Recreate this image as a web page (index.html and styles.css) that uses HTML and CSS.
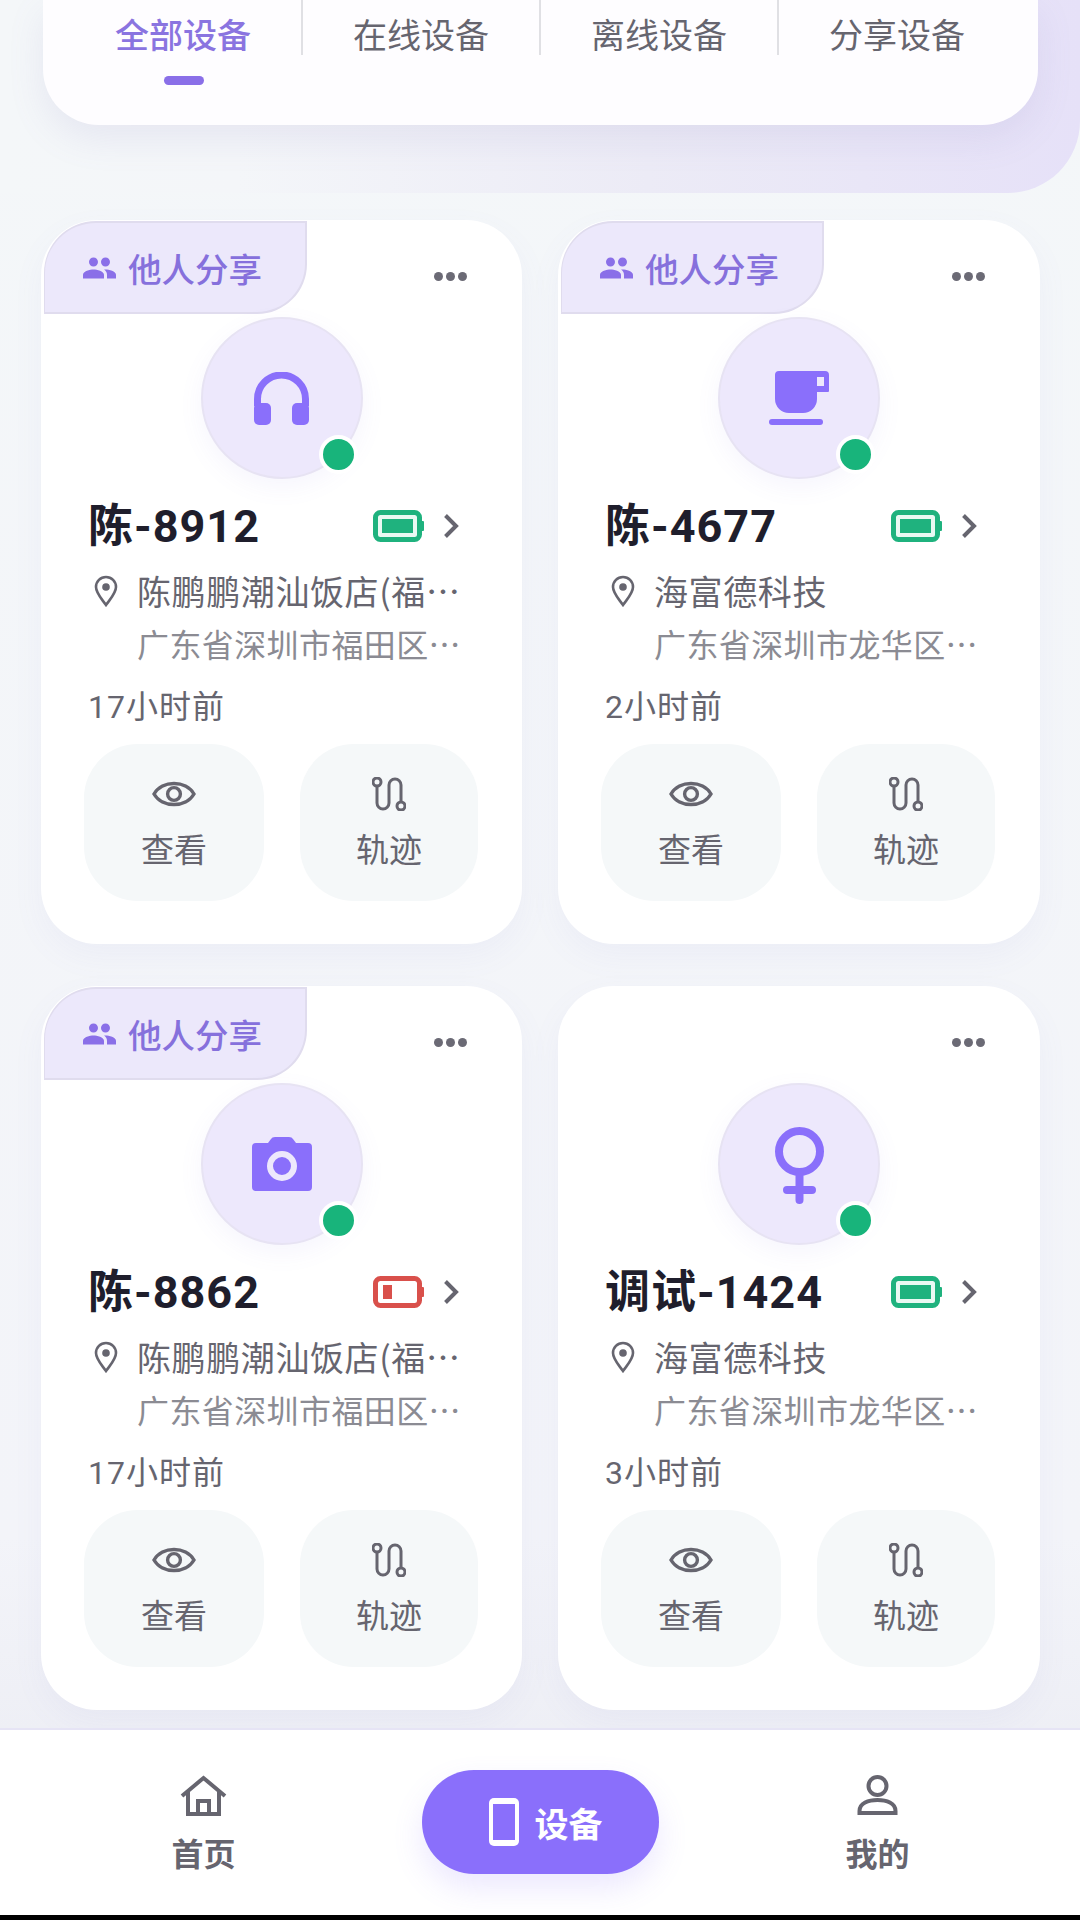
FILE: index.html
```html
<!DOCTYPE html>
<html lang="zh-CN">
<head>
    <meta charset="UTF-8">
    <meta name="viewport" content="width=device-width, initial-scale=1.0">
    <title>设备</title>
    <link rel="stylesheet" href="styles.css">
</head>
<body>
    <!-- Shared icons -->
    <svg class="icon-defs" aria-hidden="true">
        <symbol id="i-people" viewBox="1 5 22 14"><path d="M16 11c1.66 0 2.99-1.34 2.99-3S17.66 5 16 5c-1.66 0-3 1.34-3 3s1.34 3 3 3zm-8 0c1.66 0 2.99-1.34 2.99-3S9.66 5 8 5C6.34 5 5 6.34 5 8s1.34 3 3 3zm0 2c-2.33 0-7 1.17-7 3.5V19h14v-2.5c0-2.33-4.67-3.5-7-3.5zm8 0c-.29 0-.62.02-.97.05 1.16.84 1.97 1.97 1.97 3.45V19h6v-2.5c0-2.33-4.67-3.5-7-3.5z"/></symbol>
        <symbol id="i-headphones" viewBox="0 0 55 53"><path d="M3.5 34V27a24 24 0 0 1 48 0v7" fill="none" stroke="currentColor" stroke-width="7"/><rect y="31" width="17" height="22" rx="5"/><rect x="38" y="31" width="17" height="22" rx="5"/></symbol>
        <symbol id="i-cup" viewBox="0 0 60 54"><path fill-rule="evenodd" d="M10 0h46a4 4 0 0 1 4 4v16a1 1 0 0 1-1 1H48v7a14 14 0 0 1-14 14H20A14 14 0 0 1 6 28V4a4 4 0 0 1 4-4zm38 6v9h7V6z"/><rect y="48" width="54" height="6" rx="3"/></symbol>
        <symbol id="i-camera" viewBox="0 0 60 54"><path d="M4 6h12l3-4q1-2 4-2h14q3 0 4 2l3 4h12a4 4 0 0 1 4 4v40a4 4 0 0 1-4 4H4a4 4 0 0 1-4-4V10a4 4 0 0 1 4-4z"/><circle cx="30" cy="29" r="12" fill="none" stroke="#ede8fc" stroke-width="6"/></symbol>
        <symbol id="i-venus" viewBox="0 0 49 77"><g fill="none" stroke="currentColor" stroke-width="8" stroke-linecap="round"><circle cx="24.5" cy="24.5" r="20.5"/><path d="M24.5 46v27M12 63h25"/></g></symbol>
        <symbol id="i-battery" viewBox="0 0 51 32"><rect x="2.5" y="2.5" width="44" height="27" rx="5" fill="#eaf9f3" stroke="currentColor" stroke-width="5"/><rect x="9" y="9" width="31" height="14" fill="currentColor"/><rect x="48" y="11" width="3" height="10" rx="1" fill="currentColor"/></symbol>
        <symbol id="i-battery-low" viewBox="0 0 51 32"><rect x="2.5" y="2.5" width="44" height="27" rx="5" fill="#fff" stroke="currentColor" stroke-width="5"/><rect x="10" y="9" width="9" height="14" fill="currentColor"/><rect x="48" y="11" width="3" height="10" rx="1" fill="currentColor"/></symbol>
        <symbol id="i-chevron" viewBox="0 0 16 26"><path d="M2.5 2.5L13 13 2.5 23.5" fill="none" stroke="currentColor" stroke-width="4"/></symbol>
        <symbol id="i-pin" viewBox="0 0 24 32"><path d="M12 30C7 23 2 18 2 12a10 10 0 0 1 20 0c0 6-5 11-10 18z" fill="none" stroke="currentColor" stroke-width="2.6"/><circle cx="12" cy="12" r="3.8"/></symbol>
        <symbol id="i-eye" viewBox="0 0 44 30"><g fill="none" stroke="currentColor" stroke-width="3.4"><path d="M2 15C10 1 34 1 42 15 34 29 10 29 2 15z"/><circle cx="22" cy="15" r="6.4"/></g></symbol>
        <symbol id="i-track" viewBox="0 0 34 34"><g fill="none" stroke="currentColor" stroke-width="3"><circle cx="5" cy="5" r="4"/><circle cx="29" cy="29" r="4"/><path d="M5 9v17a6 6 0 0 0 12 0V8a6 6 0 0 1 12 0v17"/></g></symbol>
    </svg>

    <div class="page">
        <div class="header">
            <div class="tabs-card">
                <div class="tab active"><span class="tab-label">全部设备</span><i class="tab-bar"></i></div>
                <div class="tab"><span class="tab-label">在线设备</span></div>
                <div class="tab"><span class="tab-label">离线设备</span></div>
                <div class="tab"><span class="tab-label no-line">分享设备</span></div>
            </div>
        </div>

        <div class="device-grid">
            <div class="device">
                <div class="device-top">
                    <div class="share-tag"><svg class="tag-icon"><use href="#i-people"/></svg>他人分享</div>
                    <div class="more"><i></i><i></i><i></i></div>
                </div>
                <div class="avatar">
                    <svg class="ic-headphones"><use href="#i-headphones"/></svg>
                    <span class="online"></span>
                </div>
                <div class="name-row">
                    <span class="name">陈-8912</span>
                    <svg class="battery"><use href="#i-battery"/></svg>
                    <svg class="chevron"><use href="#i-chevron"/></svg>
                </div>
                <div class="place-row">
                    <svg class="pin"><use href="#i-pin"/></svg>
                    <span class="place">陈鹏鹏潮汕饭店(福…</span>
                </div>
                <div class="address">广东省深圳市福田区…</div>
                <div class="time">17小时前</div>
                <div class="actions">
                    <div class="action"><svg class="ic-eye"><use href="#i-eye"/></svg>查看</div>
                    <div class="action"><svg class="ic-track"><use href="#i-track"/></svg>轨迹</div>
                </div>
            </div>

            <div class="device">
                <div class="device-top">
                    <div class="share-tag"><svg class="tag-icon"><use href="#i-people"/></svg>他人分享</div>
                    <div class="more"><i></i><i></i><i></i></div>
                </div>
                <div class="avatar">
                    <svg class="ic-cup"><use href="#i-cup"/></svg>
                    <span class="online"></span>
                </div>
                <div class="name-row">
                    <span class="name">陈-4677</span>
                    <svg class="battery"><use href="#i-battery"/></svg>
                    <svg class="chevron"><use href="#i-chevron"/></svg>
                </div>
                <div class="place-row">
                    <svg class="pin"><use href="#i-pin"/></svg>
                    <span class="place">海富德科技</span>
                </div>
                <div class="address">广东省深圳市龙华区…</div>
                <div class="time">2小时前</div>
                <div class="actions">
                    <div class="action"><svg class="ic-eye"><use href="#i-eye"/></svg>查看</div>
                    <div class="action"><svg class="ic-track"><use href="#i-track"/></svg>轨迹</div>
                </div>
            </div>

            <div class="device">
                <div class="device-top">
                    <div class="share-tag"><svg class="tag-icon"><use href="#i-people"/></svg>他人分享</div>
                    <div class="more"><i></i><i></i><i></i></div>
                </div>
                <div class="avatar">
                    <svg class="ic-camera"><use href="#i-camera"/></svg>
                    <span class="online"></span>
                </div>
                <div class="name-row">
                    <span class="name">陈-8862</span>
                    <svg class="battery low"><use href="#i-battery-low"/></svg>
                    <svg class="chevron"><use href="#i-chevron"/></svg>
                </div>
                <div class="place-row">
                    <svg class="pin"><use href="#i-pin"/></svg>
                    <span class="place">陈鹏鹏潮汕饭店(福…</span>
                </div>
                <div class="address">广东省深圳市福田区…</div>
                <div class="time">17小时前</div>
                <div class="actions">
                    <div class="action"><svg class="ic-eye"><use href="#i-eye"/></svg>查看</div>
                    <div class="action"><svg class="ic-track"><use href="#i-track"/></svg>轨迹</div>
                </div>
            </div>

            <div class="device">
                <div class="device-top">
                    <div class="more"><i></i><i></i><i></i></div>
                </div>
                <div class="avatar">
                    <svg class="ic-venus"><use href="#i-venus"/></svg>
                    <span class="online"></span>
                </div>
                <div class="name-row">
                    <span class="name">调试-1424</span>
                    <svg class="battery"><use href="#i-battery"/></svg>
                    <svg class="chevron"><use href="#i-chevron"/></svg>
                </div>
                <div class="place-row">
                    <svg class="pin"><use href="#i-pin"/></svg>
                    <span class="place">海富德科技</span>
                </div>
                <div class="address">广东省深圳市龙华区…</div>
                <div class="time">3小时前</div>
                <div class="actions">
                    <div class="action"><svg class="ic-eye"><use href="#i-eye"/></svg>查看</div>
                    <div class="action"><svg class="ic-track"><use href="#i-track"/></svg>轨迹</div>
                </div>
            </div>
        </div>

        <div class="bottom-nav">
            <div class="nav-item">
                <svg class="nav-icon" viewBox="0 0 47 41"><path d="M2 21L23.5 3 45 21M8 16v23h31V16M18 39V26h11v13" fill="none" stroke="currentColor" stroke-width="4"/></svg>
                首页
            </div>
            <div class="nav-main">
                <svg class="nav-phone" viewBox="0 0 30 48"><rect width="30" height="48" rx="5" fill="#fff"/><rect x="4" y="6" width="22" height="36" fill="#8a6ffb"/></svg>
                设备
            </div>
            <div class="nav-item">
                <svg class="nav-icon" viewBox="0 0 40 41"><g fill="none" stroke="currentColor" stroke-width="4"><circle cx="20" cy="11" r="9"/><path d="M2 38v-2c0-8 9-11 18-11s18 3 18 11v2z"/></g></svg>
                我的
            </div>
        </div>
        <div class="system-edge"></div>
    </div>
</body>
</html>
```

FILE: styles.css
```css
* {
    box-sizing: border-box;
}

body {
    margin: 0;
    font-family: Roboto, "Noto Sans CJK SC", sans-serif;
    color: #66656f;
}

.icon-defs {
    display: none;
}

.page {
    width: 1080px;
    height: 1920px;
    display: flex;
    flex-direction: column;
    overflow: hidden;
    background: linear-gradient(180deg, #f4f7f9 0%, #f3f4f9 80%, #e9eaf2 100%);
}

/* Header with tabs */
.header {
    height: 193px;
    padding: 0 42px 0 43px;
    background: linear-gradient(90deg, #f4f7f9 0%, #f4f6f9 22%, #ecebf6 60%, #e6e1f8 100%);
    border-bottom-right-radius: 72px;
}

.tabs-card {
    height: 125px;
    padding: 0 22px;
    display: grid;
    grid-template-columns: repeat(4, 238px);
    background: #fefdff;
    border-radius: 0 0 56px 56px;
    box-shadow: 0 14px 36px rgba(130, 120, 190, 0.12);
}

.tab {
    display: flex;
    flex-direction: column;
    align-items: center;
    font-size: 34px;
}

.tab-label {
    width: 100%;
    height: 55px;
    padding-top: 10px;
    line-height: 52px;
    text-align: center;
    border-right: 2px solid #e0e0e4;
}

.no-line {
    border-right-color: transparent;
}

.tab.active {
    color: #8a74e0;
    font-weight: 500;
}

.tab-bar {
    width: 40px;
    height: 9px;
    margin-top: 21px;
    border-radius: 5px;
    background: #8a6fe8;
}

/* Device cards */
.device-grid {
    flex: 1;
    padding: 27px 40px 0 41px;
    display: grid;
    grid-template-columns: 481px 482px;
    grid-auto-rows: 724px;
    gap: 42px 36px;
}

.device {
    display: flex;
    flex-direction: column;
    background: #fff;
    border-radius: 56px;
    box-shadow: 0 12px 32px rgba(125, 115, 200, 0.06);
}

.device-top {
    height: 93px;
    display: flex;
}

.share-tag {
    width: 263px;
    height: 93px;
    margin: 1px 0 0 3px;
    padding-left: 38px;
    display: flex;
    align-items: center;
    gap: 12px;
    font-size: 33.5px;
    font-weight: 500;
    color: #8670dc;
    background: #ece8fb;
    border: 2px solid #e0dcee;
    border-left-width: 1px;
    border-radius: 52px 0 50px 0;
}

.tag-icon {
    width: 33px;
    height: 22px;
    fill: #8a6fe8;
}

.more {
    margin: 52px 0 0 auto;
    padding-right: 55px;
    display: flex;
    gap: 3px;
}

.more i {
    width: 9px;
    height: 9px;
    border-radius: 50%;
    background: #6b6a75;
}

.avatar {
    position: relative;
    width: 162px;
    height: 162px;
    margin: 4px auto 0;
    display: flex;
    align-items: center;
    justify-content: center;
    color: #8a6ffb;
    fill: #8a6ffb;
    background: #ede8fc;
    border: 2px solid #e7e3f3;
    border-radius: 50%;
    box-shadow: 0 8px 24px rgba(130, 110, 230, 0.07);
}

.ic-headphones {
    width: 55px;
    height: 53px;
}

.ic-cup {
    width: 60px;
    height: 54px;
}

.ic-camera {
    width: 60px;
    height: 54px;
}

.ic-venus {
    width: 49px;
    height: 77px;
    margin-top: 2px;
}

.online {
    position: absolute;
    right: 3px;
    bottom: 3px;
    width: 39px;
    height: 39px;
    background: #18b47b;
    border: 4px solid #fff;
    border-radius: 50%;
}

.name-row {
    height: 52px;
    margin-top: 21px;
    padding: 0 63px 0 47px;
    display: flex;
    align-items: center;
}

.name {
    flex: 1;
    margin-bottom: 8px;
    font-size: 45px;
    font-weight: 700;
    letter-spacing: 1px;
    color: #1f1e2c;
}

.battery {
    width: 51px;
    height: 32px;
    color: #1fb27e;
}

.battery.low {
    color: #d9504b;
}

.chevron {
    width: 16px;
    height: 26px;
    margin-left: 19px;
}

.place-row {
    height: 46px;
    margin-top: 16px;
    padding-left: 53px;
    display: flex;
    align-items: center;
}

.pin {
    width: 24px;
    height: 32px;
    fill: #66656f;
}

.place {
    margin-left: 19px;
    font-family: "Noto Sans CJK SC", sans-serif;
    font-size: 34px;
    line-height: 46px;
    letter-spacing: 0.6px;
    white-space: nowrap;
}

.address {
    height: 46px;
    margin: 6px 0 0 96px;
    font-family: "Noto Sans CJK SC", sans-serif;
    font-size: 32px;
    line-height: 46px;
    letter-spacing: 0.4px;
    color: #8b8b93;
    white-space: nowrap;
}

.time {
    height: 46px;
    margin-top: 18px;
    padding-left: 47px;
    font-size: 32px;
    line-height: 46px;
    letter-spacing: 1px;
}

.actions {
    margin-top: 14px;
    padding-left: 43px;
    display: grid;
    grid-template-columns: 180px 178px;
    gap: 36px;
}

.action {
    height: 157px;
    padding-top: 29px;
    display: flex;
    flex-direction: column;
    align-items: center;
    font-size: 33px;
    line-height: 46px;
    background: #f5f8f9;
    border-radius: 54px;
}

.ic-eye {
    width: 44px;
    height: 30px;
    margin: 6px 0 19px;
}

.ic-track {
    width: 34px;
    height: 34px;
    margin: 4px 0 17px;
}

/* Bottom navigation */
.bottom-nav {
    height: 187px;
    padding: 0 35px;
    display: grid;
    grid-template-columns: repeat(3, 337px);
    justify-items: center;
    background: #fff;
    border-top: 2px solid #e6e4f5;
}

.nav-item {
    padding-top: 45px;
    display: flex;
    flex-direction: column;
    align-items: center;
    gap: 19px;
    font-size: 32px;
    font-weight: 700;
    line-height: 40px;
}

.nav-icon {
    width: 47px;
    height: 41px;
}

.nav-main {
    width: 237px;
    height: 104px;
    margin-top: 40px;
    padding-left: 10px;
    display: flex;
    align-items: center;
    justify-content: center;
    gap: 16px;
    font-size: 34px;
    font-weight: 700;
    color: #fff;
    background: #8a6ffb;
    border-radius: 52px;
    box-shadow: 0 14px 30px rgba(138, 111, 251, 0.16);
}

.nav-phone {
    width: 30px;
    height: 48px;
}

.system-edge {
    height: 5px;
    background: #000;
}
```
